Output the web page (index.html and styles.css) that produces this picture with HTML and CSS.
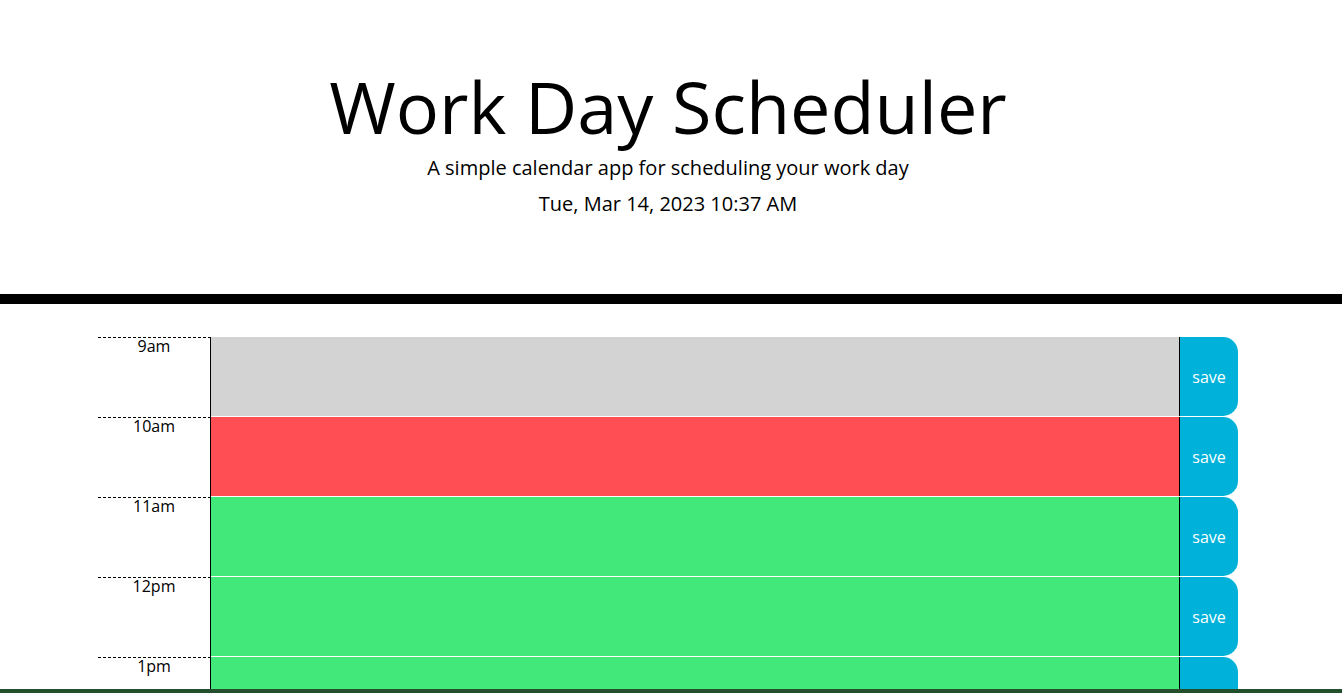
FILE: index.html
```html
<!DOCTYPE html>
<html lang="en">
<head>
<meta charset="utf-8">
<title>Work Day Scheduler</title>
<link rel="stylesheet" href="styles.css">
</head>
<body>
<header class="banner">
  <h1 class="title">Work Day Scheduler</h1>
  <p class="lead">A simple calendar app for scheduling your work day</p>
  <p class="today">Tue, Mar 14, 2023 10:37 AM</p>
</header>
<main class="planner">
  <div class="slot">
    <div class="hour">9am</div>
    <textarea class="desc past"></textarea>
    <button class="save-btn">save</button>
  </div>
  <div class="slot">
    <div class="hour">10am</div>
    <textarea class="desc present"></textarea>
    <button class="save-btn">save</button>
  </div>
  <div class="slot">
    <div class="hour">11am</div>
    <textarea class="desc future"></textarea>
    <button class="save-btn">save</button>
  </div>
  <div class="slot">
    <div class="hour">12pm</div>
    <textarea class="desc future"></textarea>
    <button class="save-btn">save</button>
  </div>
  <div class="slot">
    <div class="hour">1pm</div>
    <textarea class="desc future"></textarea>
    <button class="save-btn">save</button>
  </div>
  <div class="slot">
    <div class="hour">2pm</div>
    <textarea class="desc future"></textarea>
    <button class="save-btn">save</button>
  </div>
  <div class="slot">
    <div class="hour">3pm</div>
    <textarea class="desc future"></textarea>
    <button class="save-btn">save</button>
  </div>
  <div class="slot">
    <div class="hour">4pm</div>
    <textarea class="desc future"></textarea>
    <button class="save-btn">save</button>
  </div>
  <div class="slot">
    <div class="hour">5pm</div>
    <textarea class="desc future"></textarea>
    <button class="save-btn">save</button>
  </div>
</main>
<div class="dock-strip"></div>
</body>
</html>
```

FILE: styles.css
```css
* { box-sizing: border-box; }

body {
  margin: 0;
  font-family: "Open Sans", "Liberation Sans", sans-serif;
  color: #000;
  background: #fff;
}

.banner {
  text-align: center;
  padding: 64px 38px 59px 32px;
  border-bottom: 10px solid #000;
  margin-bottom: 33px;
}

.title {
  margin: 0 0 5px;
  font-size: 72px;
  font-weight: 400;
  line-height: 84px;
}

.lead {
  margin: 0 0 6px;
  font-size: 20px;
  line-height: 30px;
  font-weight: 400;
}

.today {
  margin: 0 0 16px;
  font-size: 20px;
  line-height: 30px;
}

.planner {
  margin-left: 98px;
  width: 1140px;
  display: flex;
  flex-direction: column;
}

.slot {
  display: grid;
  grid-template-columns: 113px 968px 59px;
  align-items: start;
  height: 80px;
}

.hour {
  height: 80px;
  border-top: 1px dashed #000;
  border-right: 1px solid #000;
  text-align: center;
  font-size: 16px;
  line-height: 16px;
  padding-top: 0;
}

.desc {
  display: block;
  height: 79px;
  margin: 0;
  border: none;
  resize: none;
  font-family: inherit;
}

.past { background: #d3d3d3; }
.present { background: #ff4f55; }
.future { background: #42e87a; }

.save-btn {
  height: 79px;
  margin: 0;
  border: none;
  border-left: 1px solid #000;
  border-radius: 0 15px 15px 0;
  background: #00b2da;
  color: #fff;
  font-family: inherit;
  font-size: 16px;
  display: flex;
  align-items: center;
  justify-content: center;
  padding: 0;
}

.dock-strip {
  position: fixed;
  left: 0;
  right: 0;
  bottom: 0;
  height: 4px;
  background: #244f2c;
}
```
